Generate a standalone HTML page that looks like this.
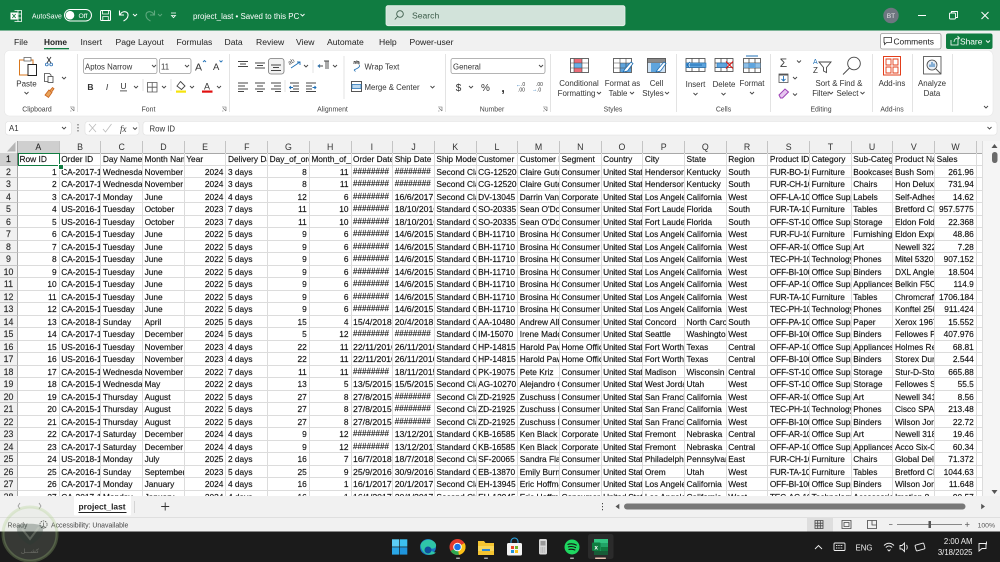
<!DOCTYPE html>
<html lang="en"><head><meta charset="utf-8"><title>project_last - Excel</title>
<style>
html,body{margin:0;padding:0;background:#f3f3f3}
body{width:1000px;height:562px;position:relative;overflow:hidden;font-family:"Liberation Sans",sans-serif}
#g{position:absolute;left:0;top:141px;width:983px;height:355px;overflow:hidden;background:#fff;font-size:8.35px;color:#111;font-family:"Liberation Sans",sans-serif;-webkit-text-stroke:.14px #111}
.r{display:flex;height:12.5px;line-height:12.5px}
.r i,.r b,.r em{font-style:normal;font-weight:normal;display:block;box-sizing:border-box;height:12.5px;overflow:hidden;white-space:nowrap;flex:none}
.r b{width:18px;background:#f1f1f1;text-align:center;font-size:8.8px;color:#333;border-right:1px solid #a8a8a8;border-bottom:1px solid #c8c8c8}
.r i{width:41.7px;padding-left:1.5px;border-right:1px solid #dcdcdc;border-bottom:1px solid #dcdcdc}
.r em{width:5.9px;border-bottom:1px solid #dcdcdc;border-right:1px solid #dcdcdc}
.n i:nth-of-type(1),.n i:nth-of-type(5),.n i:nth-of-type(7),.n i:nth-of-type(8),.n i:nth-of-type(23){text-align:right;padding:0 2px 0 0}
.n i:nth-of-type(9),.n i:nth-of-type(10){font-size:8.7px}
.n i:nth-of-type(15),.n i:nth-of-type(19){letter-spacing:-.18px}
.n i.x{font-size:8.1px}
.h{height:12.45px}
.h i{background:#f1f1f1;text-align:center;font-size:8.8px;color:#333;padding:0;border-right:1px solid #c4c4c4;border-bottom:1px solid #a8a8a8;-webkit-text-stroke:0}
.h b{border-bottom:1px solid #a8a8a8}
.h em{background:#f1f1f1;border-bottom:1px solid #a8a8a8}
.h i:first-of-type{background:#cfcfcf;color:#222;border-bottom:1px solid #777}
#one b{background:#cfcfcf;color:#222;border-right:1px solid #777}
#a1{position:absolute;left:17.5px;top:153px;width:42.5px;height:12.5px;box-sizing:border-box;border:1.3px solid #107c41}
#a1h{position:absolute;left:58px;top:164px;width:3.5px;height:3.5px;background:#107c41;border:.5px solid #fff}
svg{position:absolute;left:0;top:0}
svg text{font-family:"Liberation Sans",sans-serif}
</style></head><body>
<div id="g">
<div class="r h"><b></b><i>A</i><i>B</i><i>C</i><i>D</i><i>E</i><i>F</i><i>G</i><i>H</i><i>I</i><i>J</i><i>K</i><i>L</i><i>M</i><i>N</i><i>O</i><i>P</i><i>Q</i><i>R</i><i>S</i><i>T</i><i>U</i><i>V</i><i>W</i><em></em></div>
<div class="r" id="one"><b>1</b><i>Row ID</i><i>Order ID</i><i>Day Name</i><i>Month Name</i><i>Year</i><i>Delivery Days</i><i>Day_of_order</i><i>Month_of_order</i><i>Order Date</i><i>Ship Date</i><i>Ship Mode</i><i>Customer ID</i><i>Customer Name</i><i>Segment</i><i>Country</i><i>City</i><i>State</i><i>Region</i><i>Product ID</i><i>Category</i><i>Sub-Category</i><i>Product Name</i><i>Sales</i><em></em></div>
<div class="r n"><b>2</b><i>1</i><i>CA-2017-152156</i><i>Wednesday</i><i>November</i><i>2024</i><i>3 days</i><i>8</i><i>11</i><i class="x">########</i><i class="x">########</i><i>Second Class</i><i>CG-12520</i><i>Claire Gute</i><i>Consumer</i><i>United States</i><i>Henderson</i><i>Kentucky</i><i>South</i><i>FUR-BO-10001798</i><i>Furniture</i><i>Bookcases</i><i>Bush Somerset</i><i>261.96</i><em></em></div>
<div class="r n"><b>3</b><i>2</i><i>CA-2017-152156</i><i>Wednesday</i><i>November</i><i>2024</i><i>3 days</i><i>8</i><i>11</i><i class="x">########</i><i class="x">########</i><i>Second Class</i><i>CG-12520</i><i>Claire Gute</i><i>Consumer</i><i>United States</i><i>Henderson</i><i>Kentucky</i><i>South</i><i>FUR-CH-10000454</i><i>Furniture</i><i>Chairs</i><i>Hon Deluxe</i><i>731.94</i><em></em></div>
<div class="r n"><b>4</b><i>3</i><i>CA-2017-138688</i><i>Monday</i><i>June</i><i>2024</i><i>4 days</i><i>12</i><i>6</i><i class="x">########</i><i>16/6/2017</i><i>Second Class</i><i>DV-13045</i><i>Darrin Van Huff</i><i>Corporate</i><i>United States</i><i>Los Angeles</i><i>California</i><i>West</i><i>OFF-LA-10000240</i><i>Office Supplies</i><i>Labels</i><i>Self-Adhesive</i><i>14.62</i><em></em></div>
<div class="r n"><b>5</b><i>4</i><i>US-2016-108966</i><i>Tuesday</i><i>October</i><i>2023</i><i>7 days</i><i>11</i><i>10</i><i class="x">########</i><i>18/10/2016</i><i>Standard Class</i><i>SO-20335</i><i>Sean O'Donnell</i><i>Consumer</i><i>United States</i><i>Fort Lauderdale</i><i>Florida</i><i>South</i><i>FUR-TA-10000577</i><i>Furniture</i><i>Tables</i><i>Bretford CR</i><i>957.5775</i><em></em></div>
<div class="r n"><b>6</b><i>5</i><i>US-2016-108966</i><i>Tuesday</i><i>October</i><i>2023</i><i>7 days</i><i>11</i><i>10</i><i class="x">########</i><i>18/10/2016</i><i>Standard Class</i><i>SO-20335</i><i>Sean O'Donnell</i><i>Consumer</i><i>United States</i><i>Fort Lauderdale</i><i>Florida</i><i>South</i><i>OFF-ST-10000760</i><i>Office Supplies</i><i>Storage</i><i>Eldon Fold</i><i>22.368</i><em></em></div>
<div class="r n"><b>7</b><i>6</i><i>CA-2015-115812</i><i>Tuesday</i><i>June</i><i>2022</i><i>5 days</i><i>9</i><i>6</i><i class="x">########</i><i>14/6/2015</i><i>Standard Class</i><i>BH-11710</i><i>Brosina Hoffman</i><i>Consumer</i><i>United States</i><i>Los Angeles</i><i>California</i><i>West</i><i>FUR-FU-10001487</i><i>Furniture</i><i>Furnishings</i><i>Eldon Expressions</i><i>48.86</i><em></em></div>
<div class="r n"><b>8</b><i>7</i><i>CA-2015-115812</i><i>Tuesday</i><i>June</i><i>2022</i><i>5 days</i><i>9</i><i>6</i><i class="x">########</i><i>14/6/2015</i><i>Standard Class</i><i>BH-11710</i><i>Brosina Hoffman</i><i>Consumer</i><i>United States</i><i>Los Angeles</i><i>California</i><i>West</i><i>OFF-AR-10002833</i><i>Office Supplies</i><i>Art</i><i>Newell 322</i><i>7.28</i><em></em></div>
<div class="r n"><b>9</b><i>8</i><i>CA-2015-115812</i><i>Tuesday</i><i>June</i><i>2022</i><i>5 days</i><i>9</i><i>6</i><i class="x">########</i><i>14/6/2015</i><i>Standard Class</i><i>BH-11710</i><i>Brosina Hoffman</i><i>Consumer</i><i>United States</i><i>Los Angeles</i><i>California</i><i>West</i><i>TEC-PH-10002275</i><i>Technology</i><i>Phones</i><i>Mitel 5320</i><i>907.152</i><em></em></div>
<div class="r n"><b>10</b><i>9</i><i>CA-2015-115812</i><i>Tuesday</i><i>June</i><i>2022</i><i>5 days</i><i>9</i><i>6</i><i class="x">########</i><i>14/6/2015</i><i>Standard Class</i><i>BH-11710</i><i>Brosina Hoffman</i><i>Consumer</i><i>United States</i><i>Los Angeles</i><i>California</i><i>West</i><i>OFF-BI-10003910</i><i>Office Supplies</i><i>Binders</i><i>DXL Angle-D</i><i>18.504</i><em></em></div>
<div class="r n"><b>11</b><i>10</i><i>CA-2015-115812</i><i>Tuesday</i><i>June</i><i>2022</i><i>5 days</i><i>9</i><i>6</i><i class="x">########</i><i>14/6/2015</i><i>Standard Class</i><i>BH-11710</i><i>Brosina Hoffman</i><i>Consumer</i><i>United States</i><i>Los Angeles</i><i>California</i><i>West</i><i>OFF-AP-10002892</i><i>Office Supplies</i><i>Appliances</i><i>Belkin F5C206</i><i>114.9</i><em></em></div>
<div class="r n"><b>12</b><i>11</i><i>CA-2015-115812</i><i>Tuesday</i><i>June</i><i>2022</i><i>5 days</i><i>9</i><i>6</i><i class="x">########</i><i>14/6/2015</i><i>Standard Class</i><i>BH-11710</i><i>Brosina Hoffman</i><i>Consumer</i><i>United States</i><i>Los Angeles</i><i>California</i><i>West</i><i>FUR-TA-10001539</i><i>Furniture</i><i>Tables</i><i>Chromcraft</i><i>1706.184</i><em></em></div>
<div class="r n"><b>13</b><i>12</i><i>CA-2015-115812</i><i>Tuesday</i><i>June</i><i>2022</i><i>5 days</i><i>9</i><i>6</i><i class="x">########</i><i>14/6/2015</i><i>Standard Class</i><i>BH-11710</i><i>Brosina Hoffman</i><i>Consumer</i><i>United States</i><i>Los Angeles</i><i>California</i><i>West</i><i>TEC-PH-10002033</i><i>Technology</i><i>Phones</i><i>Konftel 250</i><i>911.424</i><em></em></div>
<div class="r n"><b>14</b><i>13</i><i>CA-2018-114412</i><i>Sunday</i><i>April</i><i>2025</i><i>5 days</i><i>15</i><i>4</i><i>15/4/2018</i><i>20/4/2018</i><i>Standard Class</i><i>AA-10480</i><i>Andrew Allen</i><i>Consumer</i><i>United States</i><i>Concord</i><i>North Carolina</i><i>South</i><i>OFF-PA-10002365</i><i>Office Supplies</i><i>Paper</i><i>Xerox 1967</i><i>15.552</i><em></em></div>
<div class="r n"><b>15</b><i>14</i><i>CA-2017-161389</i><i>Tuesday</i><i>December</i><i>2024</i><i>5 days</i><i>5</i><i>12</i><i class="x">########</i><i class="x">########</i><i>Standard Class</i><i>IM-15070</i><i>Irene Maddox</i><i>Consumer</i><i>United States</i><i>Seattle</i><i>Washington</i><i>West</i><i>OFF-BI-10003656</i><i>Office Supplies</i><i>Binders</i><i>Fellowes PB200</i><i>407.976</i><em></em></div>
<div class="r n"><b>16</b><i>15</i><i>US-2016-118983</i><i>Tuesday</i><i>November</i><i>2023</i><i>4 days</i><i>22</i><i>11</i><i>22/11/2016</i><i>26/11/2016</i><i>Standard Class</i><i>HP-14815</i><i>Harold Pawlan</i><i>Home Office</i><i>United States</i><i>Fort Worth</i><i>Texas</i><i>Central</i><i>OFF-AP-10002311</i><i>Office Supplies</i><i>Appliances</i><i>Holmes Replacement</i><i>68.81</i><em></em></div>
<div class="r n"><b>17</b><i>16</i><i>US-2016-118983</i><i>Tuesday</i><i>November</i><i>2023</i><i>4 days</i><i>22</i><i>11</i><i>22/11/2016</i><i>26/11/2016</i><i>Standard Class</i><i>HP-14815</i><i>Harold Pawlan</i><i>Home Office</i><i>United States</i><i>Fort Worth</i><i>Texas</i><i>Central</i><i>OFF-BI-10000756</i><i>Office Supplies</i><i>Binders</i><i>Storex Dura Pro</i><i>2.544</i><em></em></div>
<div class="r n"><b>18</b><i>17</i><i>CA-2015-105893</i><i>Wednesday</i><i>November</i><i>2022</i><i>7 days</i><i>11</i><i>11</i><i class="x">########</i><i>18/11/2015</i><i>Standard Class</i><i>PK-19075</i><i>Pete Kriz</i><i>Consumer</i><i>United States</i><i>Madison</i><i>Wisconsin</i><i>Central</i><i>OFF-ST-10004186</i><i>Office Supplies</i><i>Storage</i><i>Stur-D-Stor</i><i>665.88</i><em></em></div>
<div class="r n"><b>19</b><i>18</i><i>CA-2015-167164</i><i>Wednesday</i><i>May</i><i>2022</i><i>2 days</i><i>13</i><i>5</i><i>13/5/2015</i><i>15/5/2015</i><i>Second Class</i><i>AG-10270</i><i>Alejandro Grove</i><i>Consumer</i><i>United States</i><i>West Jordan</i><i>Utah</i><i>West</i><i>OFF-ST-10000107</i><i>Office Supplies</i><i>Storage</i><i>Fellowes Super</i><i>55.5</i><em></em></div>
<div class="r n"><b>20</b><i>19</i><i>CA-2015-143336</i><i>Thursday</i><i>August</i><i>2022</i><i>5 days</i><i>27</i><i>8</i><i>27/8/2015</i><i class="x">########</i><i>Second Class</i><i>ZD-21925</i><i>Zuschuss Donatelli</i><i>Consumer</i><i>United States</i><i>San Francisco</i><i>California</i><i>West</i><i>OFF-AR-10003056</i><i>Office Supplies</i><i>Art</i><i>Newell 341</i><i>8.56</i><em></em></div>
<div class="r n"><b>21</b><i>20</i><i>CA-2015-143336</i><i>Thursday</i><i>August</i><i>2022</i><i>5 days</i><i>27</i><i>8</i><i>27/8/2015</i><i class="x">########</i><i>Second Class</i><i>ZD-21925</i><i>Zuschuss Donatelli</i><i>Consumer</i><i>United States</i><i>San Francisco</i><i>California</i><i>West</i><i>TEC-PH-10001949</i><i>Technology</i><i>Phones</i><i>Cisco SPA 501G</i><i>213.48</i><em></em></div>
<div class="r n"><b>22</b><i>21</i><i>CA-2015-143336</i><i>Thursday</i><i>August</i><i>2022</i><i>5 days</i><i>27</i><i>8</i><i>27/8/2015</i><i class="x">########</i><i>Second Class</i><i>ZD-21925</i><i>Zuschuss Donatelli</i><i>Consumer</i><i>United States</i><i>San Francisco</i><i>California</i><i>West</i><i>OFF-BI-10002215</i><i>Office Supplies</i><i>Binders</i><i>Wilson Jones</i><i>22.72</i><em></em></div>
<div class="r n"><b>23</b><i>22</i><i>CA-2017-137330</i><i>Saturday</i><i>December</i><i>2024</i><i>4 days</i><i>9</i><i>12</i><i class="x">########</i><i>13/12/2017</i><i>Standard Class</i><i>KB-16585</i><i>Ken Black</i><i>Corporate</i><i>United States</i><i>Fremont</i><i>Nebraska</i><i>Central</i><i>OFF-AR-10000246</i><i>Office Supplies</i><i>Art</i><i>Newell 318</i><i>19.46</i><em></em></div>
<div class="r n"><b>24</b><i>23</i><i>CA-2017-137330</i><i>Saturday</i><i>December</i><i>2024</i><i>4 days</i><i>9</i><i>12</i><i class="x">########</i><i>13/12/2017</i><i>Standard Class</i><i>KB-16585</i><i>Ken Black</i><i>Corporate</i><i>United States</i><i>Fremont</i><i>Nebraska</i><i>Central</i><i>OFF-AP-10001492</i><i>Office Supplies</i><i>Appliances</i><i>Acco Six-Outlet</i><i>60.34</i><em></em></div>
<div class="r n"><b>25</b><i>24</i><i>US-2018-156909</i><i>Monday</i><i>July</i><i>2025</i><i>2 days</i><i>16</i><i>7</i><i>16/7/2018</i><i>18/7/2018</i><i>Second Class</i><i>SF-20065</i><i>Sandra Flanagan</i><i>Consumer</i><i>United States</i><i>Philadelphia</i><i>Pennsylvania</i><i>East</i><i>FUR-CH-10002774</i><i>Furniture</i><i>Chairs</i><i>Global Deluxe</i><i>71.372</i><em></em></div>
<div class="r n"><b>26</b><i>25</i><i>CA-2016-106320</i><i>Sunday</i><i>September</i><i>2023</i><i>5 days</i><i>25</i><i>9</i><i>25/9/2016</i><i>30/9/2016</i><i>Standard Class</i><i>EB-13870</i><i>Emily Burns</i><i>Consumer</i><i>United States</i><i>Orem</i><i>Utah</i><i>West</i><i>FUR-TA-10000577</i><i>Furniture</i><i>Tables</i><i>Bretford CR</i><i>1044.63</i><em></em></div>
<div class="r n"><b>27</b><i>26</i><i>CA-2017-121755</i><i>Monday</i><i>January</i><i>2024</i><i>4 days</i><i>16</i><i>1</i><i>16/1/2017</i><i>20/1/2017</i><i>Second Class</i><i>EH-13945</i><i>Eric Hoffmann</i><i>Consumer</i><i>United States</i><i>Los Angeles</i><i>California</i><i>West</i><i>OFF-BI-10001634</i><i>Office Supplies</i><i>Binders</i><i>Wilson Jones</i><i>11.648</i><em></em></div>
<div class="r n"><b>28</b><i>27</i><i>CA-2017-121755</i><i>Monday</i><i>January</i><i>2024</i><i>4 days</i><i>16</i><i>1</i><i>16/1/2017</i><i>20/1/2017</i><i>Second Class</i><i>EH-13945</i><i>Eric Hoffmann</i><i>Consumer</i><i>United States</i><i>Los Angeles</i><i>California</i><i>West</i><i>TEC-AC-10003027</i><i>Technology</i><i>Accessories</i><i>Imation 8</i><i>90.57</i><em></em></div>
</div>
<div id="a1"></div><div id="a1h"></div>
<svg width="1000" height="562" viewBox="0 0 1000 562" xmlns="http://www.w3.org/2000/svg">
<defs>
<path id="c" d="M-2-1 0 1 2-1" fill="none" stroke="#444" stroke-width=".9"/>
<path id="cw" d="M-2-1 0 1 2-1" fill="none" stroke="#fff" stroke-width=".9"/>
<path id="cd" d="M-2-1 0 1 2-1" fill="none" stroke="#5fa97f" stroke-width=".9"/>
</defs>
<!-- title bar -->
<rect width="1000" height="30.6" fill="#107c41"/>
<rect x="386" y="5.700" width="239" height="20" rx="2" fill="#d2e3da" stroke="#e8f1ec" stroke-width=".8"/>
<g fill="none" stroke="#fff">
<path d="M14.500 10.500h7v11h-7M18 10.500v11M14.500 14h7M14.500 18h7" stroke-width=".8"/>
<rect x="10.500" y="12.500" width="7" height="7" fill="#fff" stroke="none"/>
<path d="M12.300 14l3.400 4M15.700 14l-3.400 4" stroke="#107c41" stroke-width=".9"/>
<rect x="64.500" y="9.500" width="27" height="11.500" rx="5.700" stroke-width="1"/>
<rect x="100.500" y="10.500" width="10" height="10" rx="1" stroke-width="1"/>
<path d="M102.500 10.500v3.500h6v-3.500M102.800 20.500v-4h5.500v4" stroke-width=".8"/>
<path d="M120 15C121.500 10.500 128.500 10.500 128 15.500 127.800 18 125.500 20 123.500 21M119.500 10.500V15h4.500" stroke-width="1.100"/>
<path d="M154 15C152.500 10.500 145.500 10.500 146 15.500 146.200 18 148.500 20 150.500 21M154.500 10.500V15H150" stroke-width="1.100" stroke="#5fa97f"/>
<path d="M171 13h5M171.500 15.500h4l-2 2.200z" stroke-width=".8"/>
<circle cx="400" cy="14" r="3.300" stroke="#3f5f4d" stroke-width=".9"/>
<path d="M397.500 16.500 394.800 19.500" stroke="#3f5f4d" stroke-width=".9"/>
<path d="M918 15.500h8" stroke-width="1"/>
<rect x="949.500" y="13" width="6" height="6" rx="1" stroke-width=".9"/>
<path d="M951.500 13v-1.500h6v6H956" stroke-width=".9"/>
<path d="M981.500 12 988.500 19M988.500 12 981.500 19" stroke-width="1"/>
</g>
<circle cx="70" cy="15.200" r="4.300" fill="#fff"/>
<text x="32" y="18.300" font-size="6.900" fill="#fff">AutoSave</text>
<text x="78.500" y="18.100" font-size="6.800" fill="#fff">Off</text>
<use href="#cw" x="135" y="15"/><use href="#cd" x="160" y="15"/>
<text x="193" y="18.800" font-size="7.900" fill="#fff">project_last  •  Saved to this PC</text>
<use href="#cw" x="302.500" y="15"/>
<text x="412" y="18.500" font-size="8.600" fill="#3c5c4a">Search</text>
<circle cx="891" cy="15.500" r="7.700" fill="#6e7680"/>
<text x="891" y="18" font-size="6.600" fill="#e8e8e8" text-anchor="middle">BT</text>
<!-- ribbon bg -->
<rect y="30.600" width="1000" height="110.400" fill="#f1f1f1"/>
<g font-size="8.600" fill="#222">
<text x="14" y="45">File</text><text x="44" y="45" font-weight="bold" font-size="8.300">Home</text><text x="80.500" y="45">Insert</text><text x="115.500" y="45">Page Layout</text><text x="176.500" y="45">Formulas</text><text x="224.500" y="45">Data</text><text x="256" y="45">Review</text><text x="296" y="45">View</text><text x="327" y="45">Automate</text><text x="379" y="45">Help</text><text x="409.500" y="45">Power-user</text>
</g>
<rect x="44" y="48" width="25" height="1.300" fill="#107c41"/>
<rect x="880.500" y="33.500" width="60.500" height="15.500" rx="2" fill="#fff" stroke="#9a9a9a" stroke-width=".8"/>
<path d="M884 37.500h7.500v5h-5l-2 2v-2h-.5z" fill="none" stroke="#333" stroke-width=".8"/>
<text x="893.500" y="44.500" font-size="8.400" fill="#222">Comments</text>
<rect x="946" y="33.500" width="46.500" height="15.500" rx="2" fill="#107c41"/>
<path d="M951 40v5h7v-5M954 42c0-3 2-4 5-4M957.500 36l2 2-2 2" fill="none" stroke="#fff" stroke-width=".8"/>
<text x="960" y="44.500" font-size="8.400" fill="#fff">Share</text>
<use href="#cw" x="988" y="41.500"/>
<rect x="4.500" y="50.500" width="988.500" height="65.500" rx="5" fill="#fff" stroke="#e6e6e6" stroke-width=".6"/>
<!-- separators -->
<g stroke="#dcdcdc" stroke-width=".8">
<path d="M77.500 54v58M229.500 54v58M445.500 54v58M550.500 54v58M676.500 54v58M770.500 54v58M872.500 54v58M912.500 54v58M952.500 54v58"/>
<path d="M143 79v12M171 79v12M313 60v13M285 80v12M344 56v43"/>
</g>
<!-- group labels -->
<g font-size="6.900" fill="#444" text-anchor="middle">
<text x="37" y="111.500">Clipboard</text><text x="148.500" y="111.500">Font</text><text x="332.500" y="111.500">Alignment</text><text x="492" y="111.500">Number</text><text x="613" y="111.500">Styles</text><text x="723.500" y="111.500">Cells</text><text x="821" y="111.500">Editing</text><text x="892" y="111.500">Add-ins</text>
</g>
<g fill="none" stroke="#666" stroke-width=".6">
<path d="M70 107h4v4M71 108l3 3M70 111h1.500"/><path d="M222 107h4v4M223 108l3 3M222 111h1.500"/><path d="M438 107h4v4M439 108l3 3M438 111h1.500"/><path d="M543 107h4v4M544 108l3 3M543 111h1.500"/>
</g>
<!-- clipboard -->
<path d="M24 60h-4.500v15h10" fill="none" stroke="#d9771c" stroke-width="1"/>
<path d="M31 60h2v4" fill="none" stroke="#d9771c" stroke-width="1"/>
<rect x="24" y="57.500" width="7" height="3.500" fill="#fff" stroke="#666" stroke-width=".8"/>
<rect x="28" y="64.500" width="8.500" height="11" fill="#fff" stroke="#222" stroke-width="1"/>
<text x="26.500" y="86.500" font-size="8" fill="#333" text-anchor="middle">Paste</text>
<use href="#c" x="26.500" y="93"/>
<path d="M47 57l4 6M51 57l-4 6" stroke="#333" stroke-width=".9" fill="none"/>
<circle cx="46.800" cy="64.500" r="1.400" fill="none" stroke="#2a6fb5" stroke-width=".8"/><circle cx="51.200" cy="64.500" r="1.400" fill="none" stroke="#2a6fb5" stroke-width=".8"/>
<path d="M44.500 73.500h5l1.500 1.500v6.500h-6.500z" fill="#fff" stroke="#444" stroke-width=".8"/><rect x="48" y="76.500" width="5" height="6" fill="#fff" stroke="#444" stroke-width=".8"/>
<use href="#c" x="64" y="78"/>
<path d="M45 95l4-5 3 2.500-3.500 5zM50 90.500l2.500-3 1.500 1.200-2 3" fill="#e8a35a" stroke="#c8601a" stroke-width=".8"/>
<!-- font -->
<rect x="83.500" y="58.500" width="73.500" height="15" rx="2" fill="#fff" stroke="#9c9c9c" stroke-width=".8"/>
<rect x="159.500" y="58.500" width="31.500" height="15" rx="2" fill="#fff" stroke="#9c9c9c" stroke-width=".8"/>
<text x="85" y="69.500" font-size="7.800" fill="#333">Aptos Narrow</text>
<text x="161" y="69.500" font-size="7.800" fill="#333">11</text>
<use href="#c" x="154" y="66"/><use href="#c" x="187" y="66"/>
<text x="195" y="70.500" font-size="10.500" fill="#333">A</text><path d="M203 62l1.500-1.500L206 62" fill="none" stroke="#1f6fb5" stroke-width=".9"/>
<text x="213" y="70" font-size="9.500" fill="#333">A</text><path d="M219.500 60.500l1.500 1.500 1.500-1.500" fill="none" stroke="#1f6fb5" stroke-width=".9"/>
<text x="90.500" y="90" font-size="8.500" font-weight="bold" fill="#333" text-anchor="middle">B</text>
<text x="107" y="90" font-size="8.500" font-style="italic" fill="#333" text-anchor="middle">I</text>
<text x="123.500" y="89" font-size="8.500" fill="#333" text-anchor="middle">U</text><rect x="120" y="90.500" width="7" height=".8" fill="#333"/>
<use href="#c" x="136" y="87"/>
<path d="M147.500 82.500h9.500v9.500h-9.500zM152.200 82.500v9.500M147.500 87.200h9.500" fill="none" stroke="#555" stroke-width=".8"/>
<use href="#c" x="164" y="87"/>
<path d="M180.500 81.500 185 86l-3.500 3.500-4.500-3.500z" fill="none" stroke="#444" stroke-width=".9"/>
<rect x="176" y="90.500" width="10" height="2.200" fill="#f6e30e"/>
<use href="#c" x="192" y="87"/>
<text x="207" y="89.500" font-size="9" fill="#333" text-anchor="middle">A</text>
<rect x="202" y="90.500" width="10.500" height="2.200" fill="#e01010"/>
<use href="#c" x="219" y="87"/>
<!-- alignment -->
<rect x="268.500" y="58.500" width="15.500" height="15.500" rx="2.500" fill="#f2f2f2" stroke="#777" stroke-width=".8"/>
<g stroke="#444" stroke-width=".9" fill="none">
<path d="M238 61.500h10M240 64h6M238 66.500h10"/>
<path d="M255 63h10M257 65.500h6M255 68h10"/>
<path d="M271 65h10M273 67.500h6M271 70.500h10"/>
<path d="M238 83h10M238 86h7M238 89h10M238 91.500h6"/>
<path d="M255 83h10M257 86h6M255 89h10M257 91.500h6"/>
<path d="M271 83h10M274 86h7M271 89h10M275 91.500h6"/>
<path d="M290 83h9M293 86h6M293 89h6M290 91.500h9"/>
<path d="M306 83h10M306 86h6M306 89h6M306 91.500h10"/>
<path d="M319 66h4M326 61v8M328 61v8M324 61h5"/>
<path d="M354 62h5v2.500"/>
<rect x="351.500" y="81.500" width="10" height="10"/>
</g>
<path d="M293 87.500h-3.500M291 86l-1.500 1.500 1.500 1.500M312.500 87.500h3.500M314.500 86l1.500 1.500-1.500 1.500" stroke="#1f6fb5" stroke-width=".9" fill="none"/>
<path d="M291 68l9-6M297 62h3v3" stroke="#1f6fb5" stroke-width=".9" fill="none"/>
<text x="289" y="64" font-size="6" fill="#444" transform="rotate(-30 291 64)">ab</text>
<path d="M352 84.500h9v4h-9z" fill="#bcd8ee" stroke="#1f6fb5" stroke-width=".7"/>
<path d="M320 64.500l-2 1.500 2 1.500" stroke="#1f6fb5" stroke-width=".8" fill="none"/>
<use href="#c" x="306" y="66"/><use href="#c" x="335" y="66"/><use href="#c" x="432.500" y="87"/>
<text x="353" y="64" font-size="5.800" fill="#444">ab</text>
<path d="M354 70l3-1.500c2-1 3-2 2.500-3.500M354 70l1.500 1.500" stroke="#1f6fb5" stroke-width=".8" fill="none"/>
<text x="364.500" y="69.500" font-size="7.800" fill="#333">Wrap Text</text>
<text x="364.500" y="90" font-size="7.800" fill="#333">Merge &amp; Center</text>
<!-- number -->
<rect x="451" y="58.500" width="94" height="15" rx="2" fill="#fff" stroke="#9c9c9c" stroke-width=".8"/>
<text x="453" y="69.500" font-size="7.800" fill="#333">General</text>
<use href="#c" x="541" y="66"/>
<text x="458.500" y="91" font-size="10" fill="#333" text-anchor="middle">$</text><use href="#c" x="471" y="87"/>
<text x="485.500" y="91" font-size="10" fill="#333" text-anchor="middle">%</text>
<text x="503" y="92" font-size="13" font-weight="bold" fill="#333" text-anchor="middle">,</text>
<text x="516" y="86.500" font-size="5.200" fill="#1f6fb5">←</text><text x="521" y="86" font-size="5" fill="#333">.0</text><text x="518" y="91.500" font-size="5" fill="#333">.00</text>
<text x="532" y="91" font-size="5.500" fill="#1f6fb5">→</text><text x="536" y="86" font-size="5" fill="#333">.00</text><text x="537" y="91.500" font-size="5" fill="#333">.0</text>
<!-- styles -->
<rect x="570.500" y="58.500" width="18" height="14" fill="#fff" stroke="#444" stroke-width=".8"/>
<rect x="574" y="59" width="8" height="4" fill="#ea6b78"/><rect x="574" y="63" width="8" height="5" fill="#6ab0e6"/><rect x="574" y="68" width="8" height="4" fill="#ea6b78"/>
<path d="M570.500 63h18M570.500 68h18M574 58.500v14M582 58.500v14" stroke="#444" stroke-width=".6"/>
<rect x="613.500" y="58.500" width="18" height="14" fill="#fff" stroke="#444" stroke-width=".8"/>
<rect x="620" y="63" width="11" height="9" fill="#5ea4dd"/>
<path d="M613.500 63h18M613.500 68h18M620 58.500v14M626 58.500v14" stroke="#444" stroke-width=".6"/>
<path d="M623 72l2-3 6-7 2 1.500-5.500 7.500z" fill="#fff" stroke="#1f6fb5" stroke-width=".8"/>
<rect x="647.500" y="58.500" width="18" height="14" fill="#cfe3f5" stroke="#444" stroke-width=".8"/>
<rect x="647.500" y="58.500" width="18" height="4" fill="#8a8a8a" stroke="#444" stroke-width=".5"/>
<rect x="651" y="63" width="9" height="9" fill="#5ea4dd"/>
<path d="M656 72l2-3 6-7 2 1.500-5.500 7.500z" fill="#fff" stroke="#1f6fb5" stroke-width=".8"/>
<g font-size="7.900" fill="#333" text-anchor="middle">
<text x="579" y="85.800">Conditional</text><text x="576.500" y="96">Formatting</text>
<text x="622.500" y="85.800">Format as</text><text x="618" y="96">Table</text>
<text x="656.500" y="85.800">Cell</text><text x="653" y="96">Styles</text>
<text x="695.500" y="87">Insert</text><text x="724" y="87">Delete</text><text x="752" y="85.800">Format</text>
<text x="826.500" y="85.800">Sort &amp;</text><text x="821" y="96">Filter</text>
<text x="851" y="85.800">Find &amp;</text><text x="847.500" y="96">Select</text>
<text x="892" y="85.800">Add-ins</text>
<text x="932" y="85.800">Analyze</text><text x="932" y="96">Data</text>
</g>
<use href="#c" x="599" y="93"/><use href="#c" x="632" y="93"/><use href="#c" x="667" y="93"/>
<use href="#c" x="695.500" y="94"/><use href="#c" x="723.500" y="94"/><use href="#c" x="752" y="93"/>
<use href="#c" x="831" y="93"/><use href="#c" x="862.500" y="93"/>
<!-- cells -->
<g stroke="#444" stroke-width=".8" fill="none">
<rect x="686" y="58.500" width="19" height="13"/><path d="M686 63h19M686 67.500h19M692 58.500v13M699 58.500v13"/>
<rect x="715" y="58.500" width="18" height="13"/><path d="M715 63h18M715 67.500h18M721 58.500v13M727 58.500v13"/>
<rect x="743.500" y="58.500" width="17" height="14"/><path d="M743.500 63h17M743.500 68h17M749 58.500v14M755 58.500v14"/>
</g>
<rect x="686" y="63" width="20" height="4.500" fill="#5ea4dd" stroke="#1f6fb5" stroke-width=".6"/>
<path d="M702 65h-15M690 62l-3 3 3 3" stroke="#1f6fb5" stroke-width="1" fill="#fff"/>
<rect x="717" y="63" width="10" height="4.500" fill="#5ea4dd" stroke="#1f6fb5" stroke-width=".6"/>
<path d="M726 61.500l7 7M733 61.500l-7 7" stroke="#e01010" stroke-width="1"/>
<rect x="749" y="63" width="6" height="5" fill="#5ea4dd"/><rect x="743.500" y="63" width="17" height="5" fill="#5ea4dd" opacity=".7"/>
<path d="M746 56h12" stroke="#1f6fb5" stroke-width="1"/>
<!-- editing -->
<text x="783.500" y="67" font-size="12" fill="#444" text-anchor="middle">Σ</text><use href="#c" x="799" y="61.500"/>
<rect x="779" y="74" width="9" height="8.500" fill="#fff" stroke="#555" stroke-width=".8"/><rect x="779" y="74" width="9" height="1.500" fill="#555"/>
<path d="M783.500 76v5M781.500 79l2 2 2-2" stroke="#1f6fb5" stroke-width=".9" fill="none"/><use href="#c" x="795" y="78"/>
<path d="M779 95l6-6 3.500 3-6 6h-2z" fill="#e6c6ef" stroke="#9c3fb5" stroke-width="1"/><use href="#c" x="795" y="94.500"/>
<text x="813" y="64" font-size="7" fill="#1f6fb5">A</text><text x="813" y="73" font-size="8" fill="#333">Z</text>
<path d="M819 62h12l-4.500 5.500v5l-3-1.500v-3.500z" fill="none" stroke="#444" stroke-width=".9"/>
<circle cx="854" cy="63.500" r="6.300" fill="none" stroke="#444" stroke-width=".9"/>
<path d="M849.500 68 843 74.500" stroke="#444" stroke-width=".9"/>
<!-- addins -->
<rect x="883.500" y="56.500" width="17" height="18.500" fill="#fff" stroke="#e23d1a" stroke-width="1"/>
<path d="M886 59h5v6h-5zM893 59h5v6h-5zM886 67h5v6h-5zM893 67h5v6h-5z" fill="none" stroke="#e23d1a" stroke-width=".9"/>
<rect x="923.500" y="56.500" width="17.500" height="17.500" fill="#fff" stroke="#444" stroke-width=".8"/>
<circle cx="932" cy="65" r="5" fill="#e8eef5" stroke="#444" stroke-width=".8"/>
<path d="M930 67v-2.500M932 67v-5M934 67v-3.500" stroke="#1f6fb5" stroke-width="1"/>
<path d="M936 69l5 5" stroke="#555" stroke-width="1"/>
<use href="#c" x="986" y="107"/>
<!-- formula bar -->
<rect x="5.500" y="121.500" width="66" height="13.500" rx="3" fill="#fff" stroke="#e0e0e0" stroke-width=".6"/>
<text x="9" y="131" font-size="7.800" fill="#333">A1</text><use href="#c" x="64" y="128"/>
<path d="M78 124v1.500M78 127v1.500M78 130v1.500" stroke="#555" stroke-width="1"/>
<rect x="85" y="121.500" width="54" height="13.500" rx="3" fill="#fff" stroke="#e0e0e0" stroke-width=".6"/>
<path d="M89 124l7 8M96 124l-7 8" stroke="#bbb" stroke-width=".8"/>
<path d="M103 129l2.500 3 6-8" stroke="#bbb" stroke-width=".8" fill="none"/>
<text x="120" y="132" font-size="9" font-style="italic" fill="#333" style="font-family:'Liberation Serif',serif">fx</text>
<use href="#c" x="135" y="128.500"/>
<rect x="143" y="121.500" width="854" height="13.500" rx="3" fill="#fff" stroke="#e0e0e0" stroke-width=".6"/>
<text x="149.500" y="131.500" font-size="7.800" fill="#333">Row ID</text>
<use href="#c" x="989.500" y="128"/>
<!-- corner -->
<path d="M15.500 142 15.500 151.500 7 151.500z" fill="#b5b5b5"/>
<!-- scrollbar -->
<rect x="983" y="141" width="17" height="355" fill="#f5f5f5"/>
<path d="M994.500 144l3 4h-6z" fill="#555"/>
<rect x="992" y="152" width="5.500" height="11" rx="2.700" fill="#6a6a6a"/>
<path d="M994.500 494l3-4h-6z" fill="#555"/>
<!-- bottom -->
<rect y="496" width="1000" height="21.500" fill="#f1f1f1"/>
<rect x="0" y="517.500" width="1000" height="14" fill="#f1f1f1"/>
<path d="M0 517.500h1000" stroke="#d8d8d8" stroke-width=".7"/>
<path d="M20 503l-2 3 2 3M39 503l2 3-2 3" fill="none" stroke="#999" stroke-width=".8"/>
<rect x="74" y="496" width="57" height="19.500" rx="1" fill="#fff"/>
<text x="78.500" y="509.500" font-size="8.400" font-weight="bold" fill="#222">project_last</text>
<rect x="78.500" y="512" width="48" height="1" fill="#222"/>
<path d="M134.500 501v12" stroke="#c8c8c8" stroke-width=".7"/>
<path d="M165.200 502.500v8M161.200 506.500h8" stroke="#333" stroke-width=".9"/>
<path d="M602.500 503v1.300M602.500 506v1.300M602.500 509v1.300" stroke="#444" stroke-width="1"/>
<path d="M615.500 506.500l3.800-2.700v5.400z" fill="#555"/>
<rect x="624" y="503.500" width="341.500" height="6" rx="3" fill="#777"/>
<path d="M985 506.500l-3.800-2.700v5.400z" fill="#555"/>
<text x="7.500" y="527.500" font-size="6.900" fill="#444">Ready</text>
<circle cx="43.500" cy="524.500" r="3.600" fill="none" stroke="#444" stroke-width=".8" stroke-dasharray="1.500 .8"/>
<path d="M43.500 522.500v4M41.500 528l2-2 2 2" stroke="#444" stroke-width=".7" fill="none"/>
<text x="51" y="527.500" font-size="6.900" fill="#444">Accessibility: Unavailable</text>
<rect x="807" y="518" width="26" height="13.500" fill="#dedede"/>
<g fill="none" stroke="#444" stroke-width=".8">
<path d="M815 520.500h8v8h-8zM815 523.200h8M815 525.800h8M817.700 520.500v8M820.300 520.500v8"/>
<path d="M842 520.500h9v8h-9zM844 522.500h5v4h-5z"/>
<path d="M867.500 520.500h9v8h-9zM872 520.500v4.500h4.500"/>
<path d="M889 524.500h3.500M897 524.500h65M965 524.500h4.500M967.200 522.300v4.400" stroke="#666"/>
</g>
<rect x="928.500" y="521" width="2.500" height="7" fill="#555"/>
<text x="995" y="527.500" font-size="6.800" fill="#555" text-anchor="end">100%</text>
<!-- taskbar -->
<rect y="531.500" width="1000" height="30.500" fill="#1b1b1b"/>
<rect x="392" y="539.300" width="7.300" height="7.300" fill="#5ccdf5"/><rect x="400" y="539.300" width="7.300" height="7.300" fill="#3cc0f0"/><rect x="392" y="547.300" width="7.300" height="7.300" fill="#2aa6e6"/><rect x="400" y="547.300" width="7.300" height="7.300" fill="#1f94dc"/>
<circle cx="428" cy="547" r="8" fill="#1b74c4"/>
<path d="M420.500 545c2-6 10-7 14-3 2.500 2.500 2 6-1 6.500-3 .5-5 0-6-2 4 6 8 6 8.500 6-3 3-9 3-12 0-2-2-3-4-3.500-7.500z" fill="#2fc5a8"/>
<circle cx="428" cy="550" r="3.500" fill="#0f4f9c"/>
<circle cx="457.500" cy="547" r="8" fill="#e33b2e"/>
<path d="M457.500 547 450.600 551A8 8 0 0 0 459 554.900z" fill="#2fa84f"/>
<path d="M457.500 547 459 554.900A8 8 0 0 0 464.500 543z" fill="#fbc116"/>
<circle cx="457.500" cy="547" r="3.800" fill="#1a73e8" stroke="#fff" stroke-width="1"/>
<path d="M478 541h6l1.500 2h8.500v12h-16z" fill="#f4c430"/><rect x="478" y="546" width="16" height="5" fill="#f8d65a"/><rect x="482" y="549" width="8" height="2" fill="#2c86d4"/>
<rect x="507" y="543" width="15" height="12.500" rx="1.500" fill="#f4f4f4"/><path d="M511 543v-1.500a3.500 3.500 0 0 1 7 0v1.500" fill="none" stroke="#2aa6e6" stroke-width="1"/>
<rect x="511" y="546" width="3" height="3" fill="#e8452c"/><rect x="515" y="546" width="3" height="3" fill="#6fb52c"/><rect x="511" y="550" width="3" height="3" fill="#1f94dc"/><rect x="515" y="550" width="3" height="3" fill="#fbc116"/>
<rect x="539" y="539" width="8" height="15.500" rx="1.500" fill="#d8d8d8"/><rect x="540.500" y="541" width="5" height="4.500" fill="#9a9a9a"/><path d="M540.500 548h5M540.500 550h5M540.500 552h5" stroke="#888" stroke-width=".8" stroke-dasharray="1 .6"/>
<circle cx="572" cy="547" r="7.500" fill="#1ed760"/>
<path d="M567.500 544.500c3-1 6.500-.8 9.200.8M568 547c2.600-.8 5.500-.6 8 .7M568.500 549.500c2.200-.6 4.500-.4 6.800.6" fill="none" stroke="#111" stroke-width="1.100"/>
<rect x="588" y="534" width="25.500" height="25" rx="2.500" fill="#2b2b2b"/>
<rect x="594" y="539" width="14" height="16" rx="1" fill="#21a366"/>
<rect x="594" y="539" width="14" height="4" fill="#33c481"/><rect x="601" y="547" width="7" height="4" fill="#107c41"/><rect x="594" y="551" width="14" height="4" fill="#185c37"/>
<rect x="592" y="542.500" width="8.500" height="8.500" rx="1" fill="#107c41"/>
<text x="596.200" y="549.500" font-size="6.500" font-weight="bold" fill="#fff" text-anchor="middle">x</text>
<rect x="456" y="557.500" width="4" height="1.500" rx=".7" fill="#aaa"/><rect x="484" y="557.500" width="4" height="1.500" rx=".7" fill="#aaa"/><rect x="570" y="557.500" width="4" height="1.500" rx=".7" fill="#aaa"/><rect x="595" y="557.500" width="11" height="1.500" rx=".7" fill="#e8c0b0"/>
<g fill="none" stroke="#f0f0f0" stroke-width=".9">
<path d="M815 549l3.500-3.500 3.500 3.500"/>
<rect x="834" y="543" width="11" height="7.500" rx="1"/><path d="M836 545.500h7M836 548h7" stroke-dasharray="1 .7"/>
<path d="M884 545.500c3-3 7-3 10 0M885.800 547.500c2-2 4.400-2 6.400 0M887.500 549.500l1.500 1.500 1.500-1.500"/>
<path d="M900 545.500h2l2.500-2.500v8.500l-2.500-2.500h-2zM906.500 545c1 1 1 3.500 0 4.500"/>
<rect x="915.500" y="544" width="9" height="6" rx="1" transform="rotate(-15 920 547)"/>
<path d="M979 543.500h7v5h-4l-3 2.500v-2.500z"/><path d="M986.500 541.500v3"/>
</g>
<text x="864" y="550.300" font-size="7.800" fill="#f0f0f0" text-anchor="middle">ENG</text>
<text x="972.500" y="544" font-size="7.800" fill="#f0f0f0" text-anchor="end">2:00 AM</text>
<text x="972.500" y="555" font-size="7.800" fill="#f0f0f0" text-anchor="end">3/18/2025</text>
<!-- watermark -->
<circle cx="30" cy="534" r="27" fill="rgba(205,215,190,.16)" stroke="rgba(170,205,130,.28)" stroke-width="3"/>
<path d="M17 526c6-3 20-3 26 0 1 9-5 15-13 19-8-4-14-10-13-19z" fill="rgba(40,60,50,.3)"/>
<path d="M22 529l8 10 9-12" fill="none" stroke="rgba(230,240,220,.22)" stroke-width="2"/>
<text x="30" y="553" font-size="6" fill="rgba(235,235,225,.3)" text-anchor="middle" style="font-family:'DejaVu Sans',sans-serif">كشـــل</text>
</svg>
</body></html>
